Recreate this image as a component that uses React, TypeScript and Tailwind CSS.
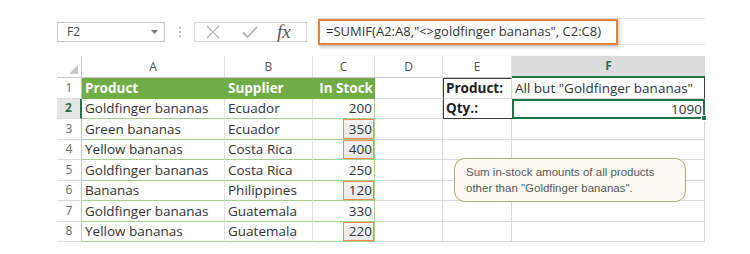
import React from "react";

const rows = [
  { p: "Goldfinger bananas", s: "Ecuador", n: "200", mark: false },
  { p: "Green bananas", s: "Ecuador", n: "350", mark: true },
  { p: "Yellow bananas", s: "Costa Rica", n: "400", mark: true },
  { p: "Goldfinger bananas", s: "Costa Rica", n: "250", mark: false },
  { p: "Bananas", s: "Philippines", n: "120", mark: true },
  { p: "Goldfinger bananas", s: "Guatemala", n: "330", mark: false },
  { p: "Yellow bananas", s: "Guatemala", n: "220", mark: true },
];

const cols = [
  { l: "A", w: "w-[143px]" },
  { l: "B", w: "w-[88px]" },
  { l: "C", w: "w-[62px]" },
  { l: "D", w: "w-[68px]" },
  { l: "E", w: "w-[69px]" },
];

const RowNum = ({ n, active }: { n: number; active?: boolean }) => (
  <div
    className={
      "flex w-[25px] items-center justify-center border-b border-[#dcdcdc] text-[12px] " +
      (active
        ? "border-r-2 border-r-[#217346] bg-[#e6e6e6] font-bold text-[#217346]"
        : "border-r border-r-[#c8c8c8] text-[#666]")
    }
  >
    {n}
  </div>
);

export default function App() {
  return (
    <div
      className="relative h-[254px] w-[750px] overflow-hidden bg-white text-[#333]"
      style={{ fontFamily: '"Open Sans", "Noto Sans", sans-serif' }}
    >
      <div className="pl-[57px] pt-[18px]">
        {/* formula bar */}
        <div className="flex h-[27px] w-[648px] items-center">
          <div className="flex h-[20px] w-[108px] items-center justify-between border border-[#c6c6c6] pl-[9px] pr-[6px] text-[12px] text-[#444]">
            <span>F2</span>
            <svg width="7" height="4" viewBox="0 0 7 4">
              <path d="M0 0h7L3.5 4z" fill="#777" />
            </svg>
          </div>
          <div className="flex w-[29px] flex-col items-center gap-[2px]">
            <span className="h-[2px] w-[2px] bg-[#bbb]" />
            <span className="h-[2px] w-[2px] bg-[#bbb]" />
            <span className="h-[2px] w-[2px] bg-[#bbb]" />
          </div>
          <div className="flex h-[20px] w-[113px] items-center border border-[#d4d4d4] pl-[10px]">
            <svg width="16" height="16" viewBox="0 0 16 16">
              <path d="M2 2L14 14M14 2L2 14" stroke="#b3b3b3" strokeWidth="1.3" fill="none" />
            </svg>
            <svg width="18" height="16" viewBox="0 0 18 16" className="ml-[20px]">
              <path d="M2 8.5L6.5 13L16 3" stroke="#b3b3b3" strokeWidth="1.8" fill="none" />
            </svg>
            <span
              className="ml-[18px] text-[19px] italic leading-none text-[#555]"
              style={{ fontFamily: '"Liberation Serif", serif' }}
            >
              fx
            </span>
          </div>
          <div className="ml-[11px] h-full flex-1 border-y border-[#e4e4e4]">
            <div className="flex h-[26px] w-[300px] items-center border-2 border-[#e8803f] pl-[6px] text-[13px] text-[#333] shadow-[1px_2px_3px_rgba(0,0,0,0.25)]">
              =SUMIF(A2:A8,"&lt;&gt;goldfinger bananas", C2:C8)
            </div>
          </div>
        </div>

        {/* column headers */}
        <div className="mt-[11px] flex h-[22px] text-[12px] text-[#555]">
          <div className="relative w-[25px] border-b border-r border-[#c8c8c8]">
            <svg width="9" height="9" viewBox="0 0 9 9" className="absolute bottom-[3px] right-[3px]">
              <path d="M9 0V9H0z" fill="#c9c9c9" />
            </svg>
          </div>
          {cols.map((c) => (
            <div
              key={c.l}
              className={`${c.w} flex items-center justify-center border-b border-r border-b-[#c8c8c8] border-r-[#dedede]`}
            >
              {c.l}
            </div>
          ))}
          <div className="flex w-[193px] items-center justify-center border-b-2 border-[#217346] bg-[#dcdcdc] font-bold text-[#217346]">
            F
          </div>
        </div>

        {/* row 1 */}
        <div className="flex h-[20.5px] text-[13.5px]">
          <RowNum n={1} />
          <div className="flex w-[143px] items-center bg-[#70ad47] pl-[3px] font-bold text-white">Product</div>
          <div className="flex w-[88px] items-center bg-[#70ad47] pl-[3px] font-bold text-white">Supplier</div>
          <div className="flex w-[62px] items-center justify-end bg-[#70ad47] pr-[2px] font-bold text-white">In Stock</div>
          <div className="w-[68px] border-b border-r border-[#dadada]" />
          <div className="flex w-[69px] items-center border-l border-t border-l-[#3a3a3a] border-t-[#3a3a3a] border-b border-b-[#dadada] border-r border-r-[#dadada] pl-[2px] font-bold text-[#222]">
            Product:
          </div>
          <div className="flex w-[193px] items-center border-r border-r-[#3a3a3a] border-b border-b-[#dadada] pl-[3px] text-[#333]">
            All but "Goldfinger bananas"
          </div>
        </div>

        {/* data rows */}
        {rows.map((r, i) => (
          <div key={i} className="flex h-[20.5px] text-[13.5px]">
            <RowNum n={i + 2} active={i === 0} />
            <div className="flex w-[143px] items-center border-b border-r border-b-[#a9d08e] border-r-[#e2e2e2] pl-[3px]">
              {r.p}
            </div>
            <div className="flex w-[88px] items-center border-b border-r border-b-[#a9d08e] border-r-[#e2e2e2] pl-[3px]">
              {r.s}
            </div>
            <div className="flex w-[62px] items-stretch justify-end border-b border-r border-[#a9d08e]">
              {r.mark ? (
                <span className="flex w-[31px] items-center justify-end border border-[#ee8a50] bg-gradient-to-b from-[#f4f4f4] to-[#e9e9e9] pr-[1px]">
                  {r.n}
                </span>
              ) : (
                <span className="flex items-center pr-[2px]">{r.n}</span>
              )}
            </div>
            <div className="w-[68px] border-b border-r border-[#dadada]" />
            {i === 0 ? (
              <>
                <div className="flex w-[69px] items-center border-b border-l border-[#3a3a3a] pl-[2px] font-bold text-[#222]">
                  Qty.:
                </div>
                <div className="relative flex w-[193px] items-center justify-end border-2 border-[#217346] pr-[1px]">
                  1090
                  <span className="absolute -bottom-[4px] -right-[4px] h-[6px] w-[6px] border border-white bg-[#217346]" />
                </div>
              </>
            ) : (
              <>
                <div className="w-[69px] border-b border-r border-[#dadada]" />
                <div className="w-[193px] border-b border-r border-[#dadada]" />
              </>
            )}
          </div>
        ))}
      </div>

      {/* callout */}
      <div
        className="absolute left-[454px] top-[158px] h-[44px] w-[232px] rounded-[11px] border-[1.5px] border-[#a9a97a] bg-[#fcfcf5] pl-[11px] pt-[5px] text-[11.5px] leading-[16px] text-[#555]"
        style={{ fontFamily: '"Liberation Sans", Arial, sans-serif' }}
      >
        Sum in-stock amounts of all products
        <br />
        other than "Goldfinger bananas".
      </div>
    </div>
  );
}
